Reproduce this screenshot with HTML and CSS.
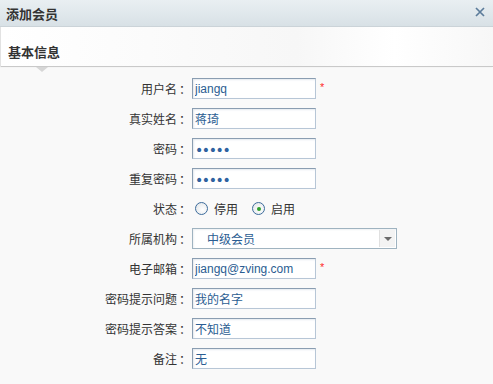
FILE: index.html
```html
<!DOCTYPE html>
<html lang="zh-CN">
<head>
    <meta charset="UTF-8">
    <title>添加会员</title>
    <link rel="stylesheet" href="styles.css">
</head>
<body>
    <div class="dialog">
        <div class="dialog-head">
            <span class="dialog-title">添加会员</span>
            <svg class="dialog-close" width="10" height="10" viewBox="0 0 10 10">
                <path d="M1 1L9 9M9 1L1 9" stroke="#5c7c9a" stroke-width="1.7" fill="none"/>
            </svg>
        </div>

        <div class="section-head">
            <span class="section-title">基本信息</span>
            <span class="section-notch"></span>
        </div>

        <form class="member-form">
            <div class="form-row">
                <label class="form-label">用户名</label>
                <input type="text" class="input-text" value="jiangq">
                <span class="required">*</span>
            </div>
            <div class="form-row">
                <label class="form-label">真实姓名</label>
                <input type="text" class="input-text" value="蒋琦">
            </div>
            <div class="form-row">
                <label class="form-label">密码</label>
                <input type="password" class="input-text" value="12345">
            </div>
            <div class="form-row">
                <label class="form-label">重复密码</label>
                <input type="password" class="input-text" value="12345">
            </div>
            <div class="form-row">
                <label class="form-label">状态</label>
                <span class="radio"></span><span class="radio-text">停用</span>
                <span class="radio radio-on"></span><span class="radio-text">启用</span>
            </div>
            <div class="form-row">
                <label class="form-label">所属机构</label>
                <div class="select">
                    <span class="select-text">中级会员</span>
                    <span class="select-btn"></span>
                </div>
            </div>
            <div class="form-row">
                <label class="form-label">电子邮箱</label>
                <input type="text" class="input-text" value="jiangq@zving.com">
                <span class="required">*</span>
            </div>
            <div class="form-row">
                <label class="form-label">密码提示问题</label>
                <input type="text" class="input-text" value="我的名字">
            </div>
            <div class="form-row">
                <label class="form-label">密码提示答案</label>
                <input type="text" class="input-text" value="不知道">
            </div>
            <div class="form-row">
                <label class="form-label">备注</label>
                <input type="text" class="input-text" value="无">
            </div>
        </form>
    </div>
</body>
</html>
```
FILE: styles.css
```css
body {
    margin: 0;
    font-family: "Liberation Sans", "Noto Sans CJK SC", sans-serif;
    font-size: 12px;
    color: #333333;
    background-color: #f9f9f9;
}

.dialog {
    width: 493px;
    height: 384px;
    overflow: hidden;
}

.dialog-head {
    height: 26px;
    display: flex;
    align-items: center;
    justify-content: space-between;
    padding: 0 8px 0 6px;
    background: linear-gradient(#e9eff2, #d8e1e6);
    border-bottom: 1px solid #c7d1d7;
}

.dialog-title {
    font-weight: bold;
    font-size: 13px;
    color: #333333;
}

.dialog-close {
    display: block;
    margin-bottom: 3px;
}

.section-head {
    position: relative;
    height: 40px;
    margin-left: 1px;
    display: flex;
    align-items: flex-end;
    padding: 0 0 5px 7px;
    box-sizing: border-box;
    background: linear-gradient(90deg, #ffffff, #f7f7f7 60%, #ffffff 80%, #f7f7f7);
    border-bottom: 1px solid #c9c9c9;
    box-shadow: -1px 0 1px #e2e2e2;
    margin-bottom: 11px;
}

.section-title {
    font-weight: bold;
    font-size: 13px;
}

.section-notch {
    position: absolute;
    left: 35px;
    bottom: -6px;
    width: 0;
    height: 0;
    border-left: 6px solid transparent;
    border-right: 6px solid transparent;
    border-top: 5px solid #d6d6d6;
}

.member-form {
    display: flex;
    flex-direction: column;
    gap: 9px;
}

.form-row {
    height: 21px;
    display: flex;
    align-items: center;
}

.form-label {
    width: 192px;
    text-align: right;
    flex-shrink: 0;
    padding-right: 1px;
    box-sizing: border-box;
}

.form-label::after {
    content: "：";
    margin-left: 2px;
    font-family: "Noto Sans CJK TC", sans-serif;
}

.input-text {
    width: 124px;
    height: 21px;
    box-sizing: border-box;
    margin: 0;
    padding: 0 2px;
    font-family: "Liberation Sans", "Noto Sans CJK SC", sans-serif;
    font-size: 12px;
    color: #2b5d92;
    background-color: #ffffff;
    border: 1px solid #b7c6d6;
    border-top-color: #8a9db1;
    border-left-color: #8a9db1;
    box-shadow: inset 1px 1px 2px #e3e8ee;
}

input[type="password"] {
    font-family: "DejaVu Sans", sans-serif;
    font-size: 14px;
    letter-spacing: -1.4px;
    padding-top: 2px;
    color: #2f62a0;
}

.required {
    color: #ff2a2a;
    margin-left: 4px;
    font-size: 11px;
    align-self: flex-start;
    margin-top: 3px;
}

.radio {
    width: 11px;
    height: 11px;
    border-radius: 50%;
    border: 1px solid #3d6c9c;
    background: radial-gradient(circle at 60% 60%, #ffffff, #dfe3e6);
    margin-left: 3px;
    display: flex;
    align-items: center;
    justify-content: center;
}

.radio-on::after {
    content: "";
    width: 4px;
    height: 4px;
    border-radius: 50%;
    background-color: #2ea02e;
}

.radio-text {
    margin-left: 6px;
    margin-right: 11px;
}

.select {
    width: 205px;
    height: 21px;
    box-sizing: border-box;
    display: flex;
    align-items: center;
    justify-content: space-between;
    background-color: #ffffff;
    border: 1px solid #9fb3c0;
    box-shadow: inset 1px 1px 2px #eef1f3;
}

.select-text {
    margin-left: 14px;
    color: #2b5d92;
}

.select-btn {
    width: 15px;
    height: 17px;
    margin-right: 1px;
    background-color: #f3f3f3;
    border-left: 1px solid #e0e0e0;
    display: flex;
    align-items: center;
    justify-content: center;
}

.select-btn::after {
    content: "";
    border-left: 4px solid transparent;
    border-right: 4px solid transparent;
    border-top: 4px solid #6b6b6b;
}
```
